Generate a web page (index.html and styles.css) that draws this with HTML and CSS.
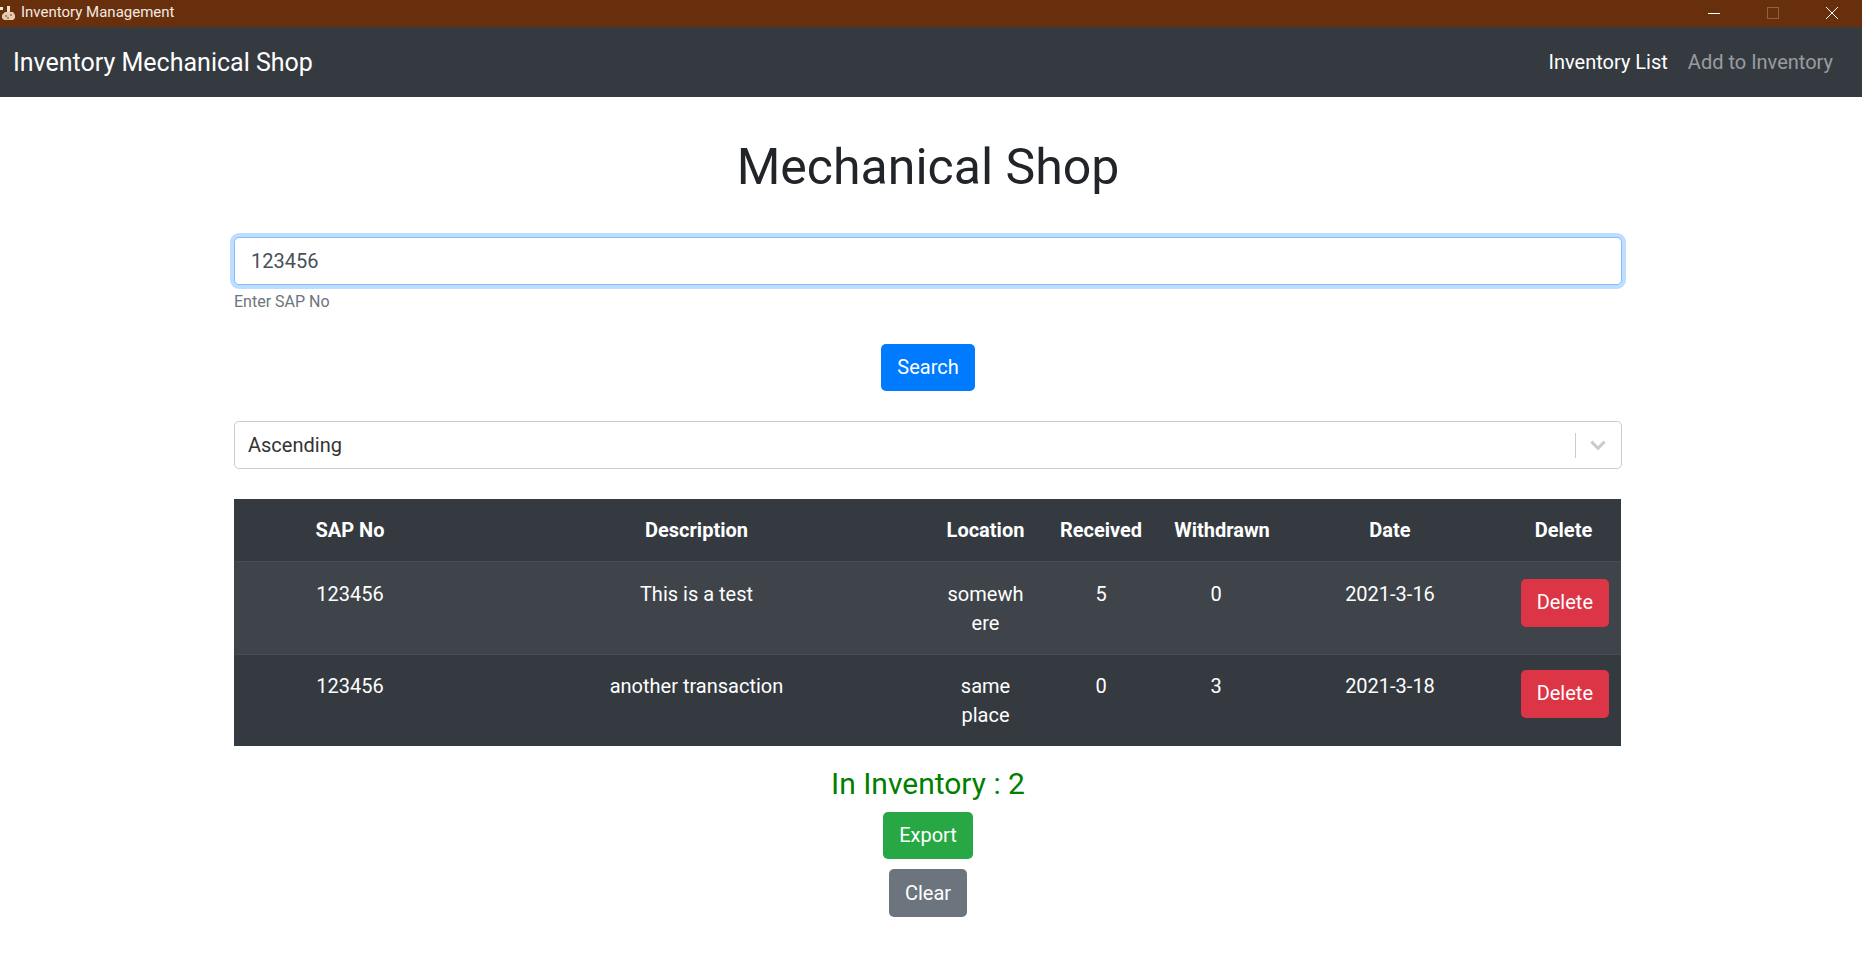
FILE: index.html
```html
<!DOCTYPE html>
<html lang="en">
<head>
    <meta charset="UTF-8">
    <title>Inventory Management</title>
    <link rel="stylesheet" href="styles.css">
</head>
<body>

    <div class="titlebar">
        <div class="titlebar-name">
            <svg class="app-icon" width="16" height="17" viewBox="0 0 16 17">
                <rect x="0" y="3" width="3" height="3" fill="#f4ead8"/>
                <rect x="7" y="2" width="3" height="7" fill="#efe0c8"/>
                <path d="M2 11l3-3h8l2 3v3l-2 2H4l-2-2z" fill="#e6cdb0"/>
                <path d="M5 11h2v2H5zM10 10h2v2h-2zM7 13h2v2H7z" fill="#a9876a"/>
            </svg>
            <span>Inventory Management</span>
        </div>
        <div class="window-controls">
            <svg width="14" height="14" viewBox="0 0 14 14"><path d="M1 7.5h12" stroke="#fff"/></svg>
            <svg width="14" height="14" viewBox="0 0 14 14"><rect x="1.5" y="1.5" width="11" height="11" fill="none" stroke="#92603f"/></svg>
            <svg width="14" height="14" viewBox="0 0 14 14"><path d="M1 1l12 12M13 1L1 13" stroke="#fff"/></svg>
        </div>
    </div>

    <nav class="navbar">
        <a class="brand" href="#">Inventory Mechanical Shop</a>
        <div class="nav-links">
            <a class="nav-link active" href="#">Inventory List</a>
            <a class="nav-link" href="#">Add to Inventory</a>
        </div>
    </nav>

    <main class="content">
        <h1>Mechanical Shop</h1>

        <input class="search-input" type="text" value="123456">
        <small class="hint">Enter SAP No</small>

        <div class="center search-row">
            <button class="btn btn-blue">Search</button>
        </div>

        <div class="sort-select">
            <span>Ascending</span>
            <div class="select-tools">
                <span class="select-sep"></span>
                <svg width="24" height="24" viewBox="0 0 20 20"><path d="M4.5 7.2L10 12.7l5.5-5.5" fill="none" stroke="#ccc" stroke-width="2.6"/></svg>
            </div>
        </div>

        <table class="stock-table">
            <colgroup>
                <col class="col-sap">
                <col class="col-desc">
                <col class="col-loc">
                <col class="col-rec">
                <col class="col-wd">
                <col class="col-date">
                <col class="col-del">
            </colgroup>
            <thead>
                <tr>
                    <th>SAP No</th>
                    <th>Description</th>
                    <th>Location</th>
                    <th>Received</th>
                    <th>Withdrawn</th>
                    <th>Date</th>
                    <th class="del-head">Delete</th>
                </tr>
            </thead>
            <tbody>
                <tr class="striped">
                    <td>123456</td>
                    <td>This is a test</td>
                    <td class="wrap">somewh<br>ere</td>
                    <td>5</td>
                    <td class="shift">0</td>
                    <td>2021-3-16</td>
                    <td class="action"><button class="btn btn-red">Delete</button></td>
                </tr>
                <tr>
                    <td>123456</td>
                    <td>another transaction</td>
                    <td class="wrap">same<br>place</td>
                    <td>0</td>
                    <td class="shift">3</td>
                    <td>2021-3-18</td>
                    <td class="action"><button class="btn btn-red">Delete</button></td>
                </tr>
            </tbody>
        </table>

        <p class="total">In Inventory : 2</p>
        <div class="center export-row"><button class="btn btn-green">Export</button></div>
        <div class="center clear-row"><button class="btn btn-grey">Clear</button></div>
    </main>

</body>
</html>
```

FILE: styles.css
```css
* {
    box-sizing: border-box;
}
body {
    margin: 0;
    background-color: #fff;
    color: #212529;
    font-family: Roboto, "Liberation Sans", sans-serif;
    font-size: 20px;
    line-height: 1.5;
    height: 977px;
    overflow: hidden;
}
a {
    text-decoration: none;
}

/* window frame */
.titlebar {
    height: 27px;
    padding-bottom: 2px;
    background-color: #682f0c;
    color: #f3e9e2;
    display: flex;
    justify-content: space-between;
    align-items: center;
    font-size: 15px;
}
.titlebar-name {
    display: flex;
    align-items: center;
    gap: 5px;
}
.window-controls {
    display: flex;
    gap: 45px;
    padding-right: 23px;
}
.window-controls svg {
    display: block;
}

/* navbar */
.navbar {
    height: 70px;
    background-color: #343a40;
    display: flex;
    justify-content: space-between;
    align-items: center;
    padding: 0 29px 0 13px;
}
.brand {
    color: #fff;
    font-size: 25px;
    padding-top: 2px;
}
.nav-links {
    display: flex;
    gap: 20px;
}
.nav-link {
    color: rgba(255,255,255,.5);
}
.nav-link.active {
    color: #fff;
}

/* page */
.content {
    width: 1388px;
    margin-left: 234px;
}
h1 {
    margin: 0;
    padding-top: 37px;
    height: 140px;
    text-align: center;
    font-size: 50px;
    font-weight: 400;
    line-height: 66px;
}
.search-input {
    display: block;
    width: 100%;
    height: 48px;
    padding: 0 16px;
    border: 1px solid #80bdff;
    border-radius: 5px;
    box-shadow: 0 0 0 4px rgba(0,123,255,.25);
    outline: 0;
    color: #495057;
    font: inherit;
}
.hint {
    display: block;
    margin-top: 5px;
    color: #6c757d;
    font-size: 16px;
    line-height: 24px;
}
.center {
    display: flex;
    justify-content: center;
}
.search-row {
    margin-top: 30px;
}
.btn {
    border: 1px solid transparent;
    border-radius: 5px;
    padding: 0 15px;
    height: 47px;
    color: #fff;
    font: inherit;
}
.btn-blue {
    background-color: #007bff;
    padding-bottom: 2px;
}
.btn-red {
    background-color: #dc3545;
    display: block;
    margin-left: auto;
}
.btn-green {
    background-color: #28a745;
}
.btn-grey {
    background-color: #6c757d;
    height: 48px;
}

/* sort dropdown */
.sort-select {
    margin-top: 30px;
    height: 48px;
    border: 1px solid #ccc;
    border-radius: 5px;
    display: flex;
    justify-content: space-between;
    align-items: center;
    padding: 0 11px 0 13px;
    color: #333;
}
.select-tools {
    display: flex;
    align-items: center;
    gap: 10px;
}
.select-sep {
    width: 1px;
    height: 25px;
    background-color: #ccc;
}
.select-tools svg {
    display: block;
}

/* table */
.stock-table {
    margin-top: 30px;
    width: 1387px;
    table-layout: fixed;
    border-collapse: collapse;
    background-color: #343a40;
    color: #fff;
    text-align: center;
}
.col-sap { width: 232px; }
.col-desc { width: 461px; }
.col-loc { width: 117px; }
.col-rec { width: 114px; }
.col-wd { width: 128px; }
.col-date { width: 208px; }
.col-del { width: 127px; }

th {
    height: 62px;
    padding: 0;
    font-weight: 700;
    border-bottom: 1px solid #454d55;
}
th.del-head {
    padding-left: 12px;
}
td {
    padding: 17px 12px 16px;
    vertical-align: top;
    line-height: 29px;
    border-top: 1px solid #454d55;
}
td.wrap {
    padding-left: 0;
    padding-right: 0;
}
td.shift {
    padding-right: 24px;
}
td.action {
    padding-top: 15px;
}
td.action .btn {
    height: 48px;
}
.striped {
    background-color: rgba(255,255,255,.05);
}
.striped td {
    padding-top: 18px;
}
.striped td.action {
    padding-top: 17px;
}
.total {
    margin: 15px 0 0;
    text-align: center;
    color: green;
    font-size: 30px;
    line-height: 45px;
}
.export-row {
    margin-top: 6px;
}
.clear-row {
    margin-top: 10px;
}
```
